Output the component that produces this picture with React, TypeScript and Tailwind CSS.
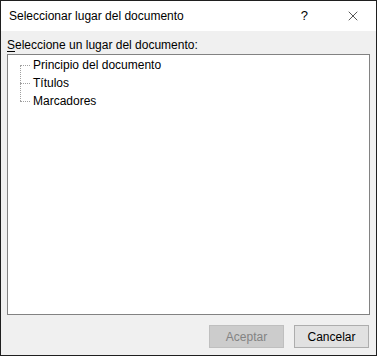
import { X } from "lucide-react";

const items = ["Principio del documento", "Títulos", "Marcadores"];

export default function App() {
  return (
    <div
      className="flex h-[356px] w-[377px] flex-col border border-[#1f1f1f] bg-[#f0f0f0] text-[12px] text-black"
      style={{ fontFamily: '"Liberation Sans", Arial, sans-serif' }}
    >
      {/* barra de título */}
      <div className="flex h-[30px] shrink-0 items-center bg-white pl-[8px]">
        <span className="flex-1 text-[12px]">Seleccionar lugar del documento</span>
        <span className="mr-[37px] text-[13px]">?</span>
        <X size={16} strokeWidth={1} className="mr-[15px]" />
      </div>

      {/* cuerpo */}
      <div className="flex flex-1 flex-col px-[6px] pt-[6px]">
        <div className="h-[17px] leading-[17px]">
          <span className="underline underline-offset-2">S</span>eleccione un lugar del documento:
        </div>
        <div className="h-[261px] border border-[#828282] bg-white pt-[1px]">
          <div className="relative pl-[24px]">
            {/* líneas punteadas del árbol */}
            <div className="absolute left-[12px] top-[9px] h-[36px] border-l border-dotted border-[#a0a0a0]" />
            {items.map((item) => (
              <div key={item} className="relative flex h-[18px] items-center">
                <div className="absolute -left-[12px] top-[9px] w-[10px] border-t border-dotted border-[#a0a0a0]" />
                <span className="pl-[1px]">{item}</span>
              </div>
            ))}
          </div>
        </div>

        {/* botones */}
        <div className="mt-[10px] flex justify-end gap-[10px] pr-[1px]">
          <button
            disabled
            className="h-[23px] w-[75px] border border-[#bfbfbf] bg-[#cccccc] text-[12px] text-[#838383]"
          >
            Aceptar
          </button>
          <button className="h-[23px] w-[75px] border border-[#adadad] bg-[#e1e1e1] text-[12px]">
            Cancelar
          </button>
        </div>
      </div>
    </div>
  );
}
